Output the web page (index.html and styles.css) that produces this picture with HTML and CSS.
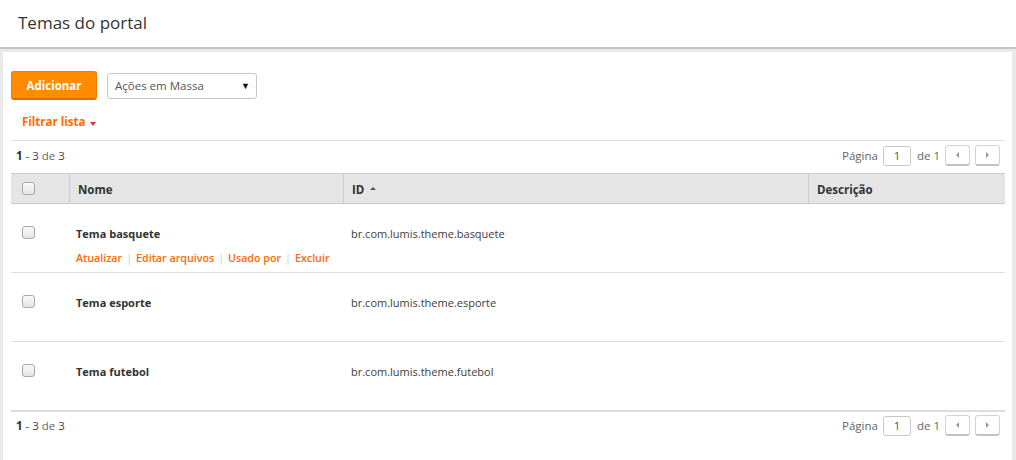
FILE: index.html
```html
<!DOCTYPE html>
<html lang="pt">
<head>
<meta charset="utf-8">
<link rel="stylesheet" href="styles.css">
</head>
<body>
<header class="page-header"><h1 class="page-title">Temas do portal</h1></header>
<main class="shell">
  <section class="panel">
    <div class="toolbar">
      <button class="btn-primary">Adicionar</button>
      <div class="select">Ações em Massa<span class="select-caret">▼</span></div>
    </div>
    <div class="filter"><a class="filter-link">Filtrar lista</a><span class="filter-caret"></span></div>
    <div class="pager pager-top">
      <div class="count"><b>1</b> - 3 <span class="muted">de</span> 3</div>
      <div class="pages">
        <span class="muted">Página</span>
        <span class="page-input">1</span>
        <span class="muted">de 1</span>
        <span class="nav-btn"><span class="tri tri-left"></span></span>
        <span class="nav-btn"><span class="tri tri-right"></span></span>
      </div>
    </div>
    <div class="grid">
      <div class="row head">
        <div class="cell c-check"><span class="checkbox"></span></div>
        <div class="cell c-name">Nome</div>
        <div class="cell c-id">ID <span class="sort"></span></div>
        <div class="cell c-desc">Descrição</div>
      </div>
      <div class="row item">
        <div class="cell c-check"><span class="checkbox"></span></div>
        <div class="cell c-name"><div class="name">Tema basquete</div>
          <div class="actions"><a>Atualizar</a><span class="sep">|</span><a>Editar arquivos</a><span class="sep">|</span><a>Usado por</a><span class="sep">|</span><a>Excluir</a></div>
        </div>
        <div class="cell c-id">br.com.lumis.theme.basquete</div>
        <div class="cell c-desc"></div>
      </div>
      <div class="row item">
        <div class="cell c-check"><span class="checkbox"></span></div>
        <div class="cell c-name"><div class="name">Tema esporte</div></div>
        <div class="cell c-id">br.com.lumis.theme.esporte</div>
        <div class="cell c-desc"></div>
      </div>
      <div class="row item">
        <div class="cell c-check"><span class="checkbox"></span></div>
        <div class="cell c-name"><div class="name">Tema futebol</div></div>
        <div class="cell c-id">br.com.lumis.theme.futebol</div>
        <div class="cell c-desc"></div>
      </div>
    </div>
    <div class="pager pager-bottom">
      <div class="count"><b>1</b> - 3 <span class="muted">de</span> 3</div>
      <div class="pages">
        <span class="muted">Página</span>
        <span class="page-input">1</span>
        <span class="muted">de 1</span>
        <span class="nav-btn"><span class="tri tri-left"></span></span>
        <span class="nav-btn"><span class="tri tri-right"></span></span>
      </div>
    </div>
  </section>
</main>
</body>
</html>
```
FILE: styles.css
```css
* { box-sizing: border-box; }
html, body { margin: 0; padding: 0; }
body {
  font-family: "Open Sans", "Noto Sans", sans-serif;
  font-size: 11px;
  color: #333;
  background: #e9e9e9;
  height: 460px;
  overflow: hidden;
}
.page-header {
  background: #fff;
  height: 49px;
  border-bottom: 2px solid #c4c4c4;
  padding: 0 18px;
  display: flex;
  align-items: center;
}
.page-title {
  margin: 0;
  font-size: 17px;
  font-weight: 400;
  color: #333;
  position: relative;
  top: -1px;
}
.shell { padding: 3px 4px 0 3px; }
.panel {
  background: #fff;
  padding: 19px 7px 30px 8px;
  height: 420px;
}
.toolbar { display: flex; align-items: center; gap: 10px; }
.btn-primary {
  width: 86px;
  height: 29px;
  background: #ff8c00;
  border: 1px solid #f07e00;
  border-bottom: 2px solid #e06b00;
  border-radius: 3px;
  color: #fff;
  font-family: inherit;
  font-size: 11.5px;
  font-weight: 700;
  padding: 0;
}
.select {
  width: 150px;
  height: 26px;
  border: 1px solid #c8c8c8;
  border-radius: 3px;
  display: flex;
  align-items: center;
  justify-content: space-between;
  padding: 0 6px 0 7px;
  color: #555;
  font-size: 11.5px;
}
.select-caret { font-size: 9px; color: #111; }
.filter { padding: 14px 0 0 11px; height: 40px; display: flex; align-items: flex-start; }
.filter-link { color: #ff6a00; font-weight: 700; font-size: 11.5px; }
.filter-caret {
  margin: 8px 0 0 5px;
  width: 0; height: 0;
  border-left: 3px solid transparent;
  border-right: 3px solid transparent;
  border-top: 4px solid #d33;
}
.pager {
  display: flex;
  justify-content: space-between;
  align-items: center;
  padding: 0 5px 3px;
  height: 33px;
  border-top: 1px solid #ddd;
}
.pager-bottom { padding-bottom: 5px; }
.count { color: #444; font-size: 11.5px; }
.count b { color: #333; }
.muted { color: #666; }
.pages { display: flex; align-items: center; font-size: 11.5px; }
.pages .muted:first-child { margin-right: 5px; }
.page-input {
  width: 28px;
  height: 20px;
  border: 1px solid #c8c8c8;
  border-radius: 3px;
  display: inline-flex;
  align-items: center;
  justify-content: center;
  margin-right: 6px;
  color: #555;
}
.nav-btn {
  width: 25px;
  height: 21px;
  border: 1px solid #d4d4d4;
  border-bottom: 2px solid #c2c2c2;
  border-radius: 3px;
  display: inline-flex;
  align-items: center;
  justify-content: center;
  margin-left: 5px;
  background: #fff;
}
.tri { width: 0; height: 0; border-top: 3px solid transparent; border-bottom: 3px solid transparent; }
.tri-left { border-right: 3px solid #999; }
.tri-right { border-left: 3px solid #999; }
.grid { border-top: 1px solid #ccc; }
.row { display: flex; }
.head {
  background: #e5e5e5;
  height: 30px;
  border-bottom: 1px solid #ccc;
  font-weight: 700;
  font-size: 11.5px;
  color: #333;
}
.head .cell { display: flex; align-items: center; border-left: 1px solid #ccc; padding-top: 2px; }
.head .cell:first-child { border-left: none; padding-top: 0; }
.c-check { width: 58px; padding-left: 11px; }
.c-name { width: 274px; padding-left: 7px; }
.c-id { width: 465px; padding-left: 8px; }
.c-desc { flex: 1; padding-left: 8px; }
.head .c-name { padding-left: 8px; }
.sort {
  display: inline-block;
  margin-left: 6px;
  width: 0; height: 0;
  border-left: 3px solid transparent;
  border-right: 3px solid transparent;
  border-bottom: 3px solid #555;
  position: relative; top: -1px;
}
.item { height: 69px; border-bottom: 1px solid #ddd; }
.item .cell { padding-top: 21px; }
.item .c-check { padding-top: 22px; }
.name { font-weight: 700; color: #333; line-height: 18px; }
.item .c-id { line-height: 18px; color: #3d3d3d; }
.actions { margin-top: 8px; font-weight: 600; font-size: 10.7px; white-space: nowrap; }
.actions a { color: #ff6a00; }
.sep { color: #ccc; font-weight: 400; margin: 0 4px; }
.checkbox {
  display: inline-block;
  width: 13px;
  height: 13px;
  border: 1px solid #a9a9a9;
  border-radius: 3px;
  background: linear-gradient(#fafafa, #e4e4e4);
}
```
